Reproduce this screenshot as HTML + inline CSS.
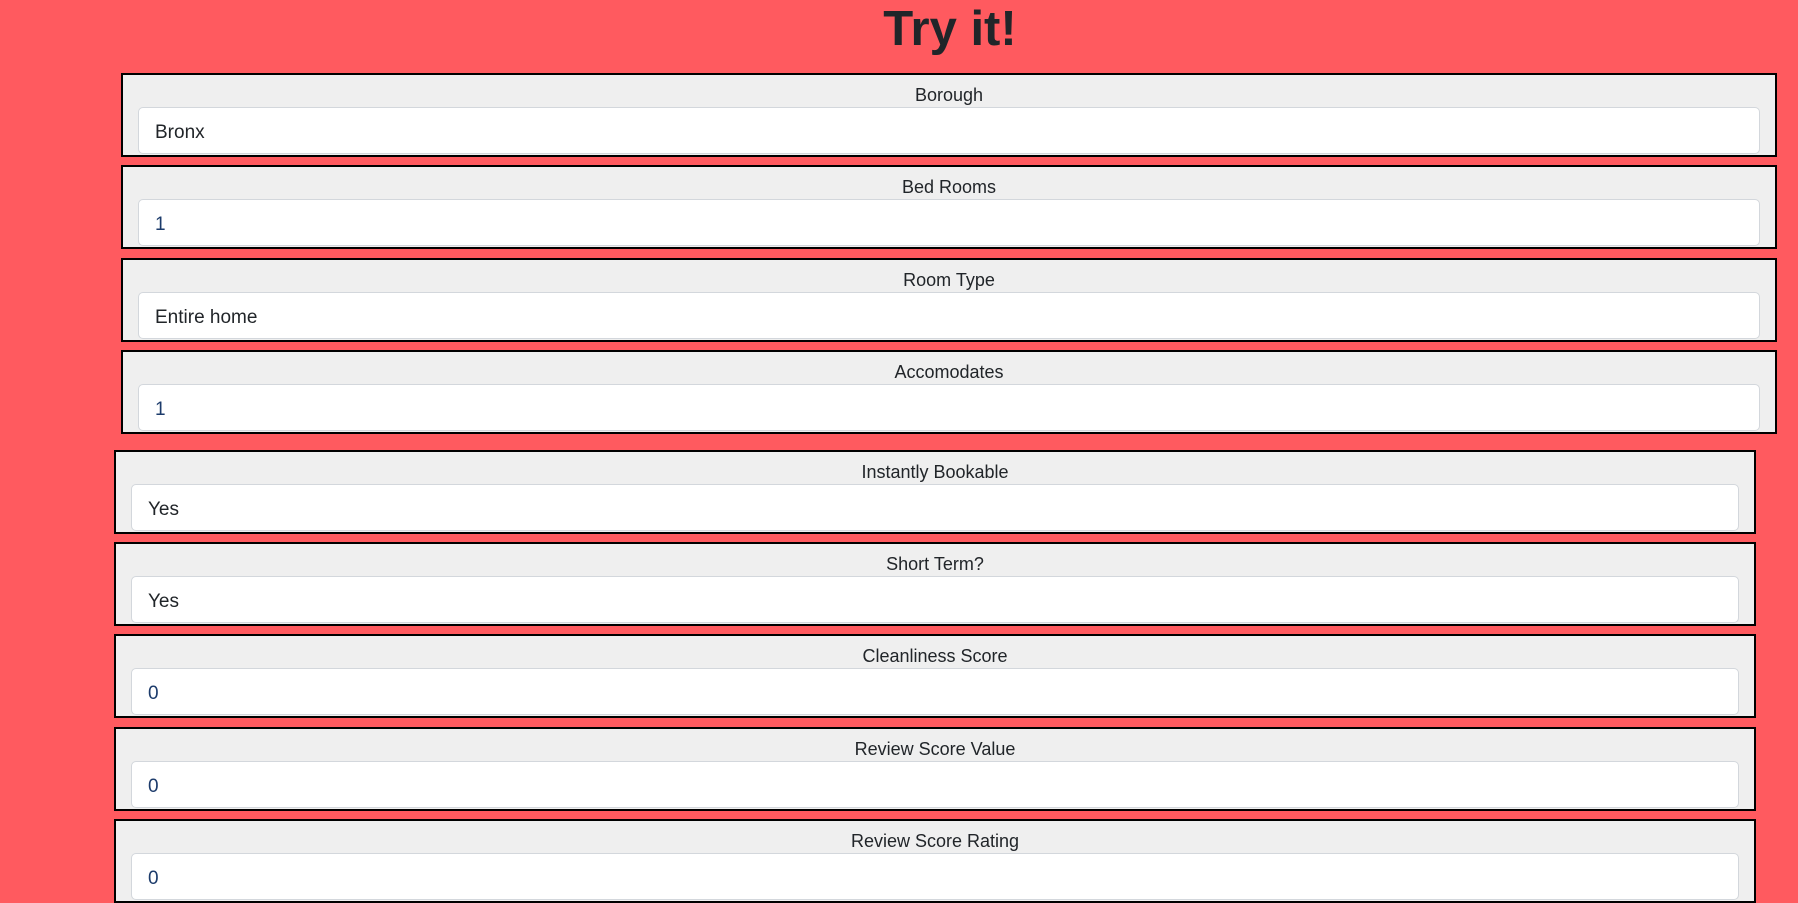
<!DOCTYPE html>
<html><head><style>
html,body{margin:0;padding:0;background:#ff5a5f;width:1798px;height:903px;overflow:hidden;font-family:"Liberation Sans",sans-serif;color:#212529}
h1{position:absolute;left:0;width:1900px;top:-1px;margin:0;text-align:center;font-size:49px;font-weight:bold;line-height:60px}
.box{position:absolute;height:80px;background:#efefef;border:2px solid #000;box-sizing:content-box}
.lbl{position:absolute;left:0;right:0;top:9px;text-align:center;font-size:18px;line-height:22px}
.in{position:absolute;left:15px;right:15px;top:32px;height:47px;background:#fff;border:1px solid #d3d7dc;border-radius:5px;box-sizing:border-box;padding-left:16px;padding-top:3px;font-size:19px;line-height:43px}
.g1{left:121px;width:1652px}
.g2{left:114px;width:1638px}
.n{color:#1c3b6b}
</style></head><body>
<h1>Try it!</h1>
<div class="box g1" style="top:73px"><div class="lbl">Borough</div><div class="in">Bronx</div></div>
<div class="box g1" style="top:165px"><div class="lbl">Bed Rooms</div><div class="in n">1</div></div>
<div class="box g1" style="top:258px"><div class="lbl">Room Type</div><div class="in">Entire home</div></div>
<div class="box g1" style="top:350px"><div class="lbl">Accomodates</div><div class="in n">1</div></div>
<div class="box g2" style="top:450px"><div class="lbl">Instantly Bookable</div><div class="in">Yes</div></div>
<div class="box g2" style="top:542px"><div class="lbl">Short Term?</div><div class="in">Yes</div></div>
<div class="box g2" style="top:634px"><div class="lbl">Cleanliness Score</div><div class="in n">0</div></div>
<div class="box g2" style="top:727px"><div class="lbl">Review Score Value</div><div class="in n">0</div></div>
<div class="box g2" style="top:819px"><div class="lbl">Review Score Rating</div><div class="in n">0</div></div>
</body></html>
